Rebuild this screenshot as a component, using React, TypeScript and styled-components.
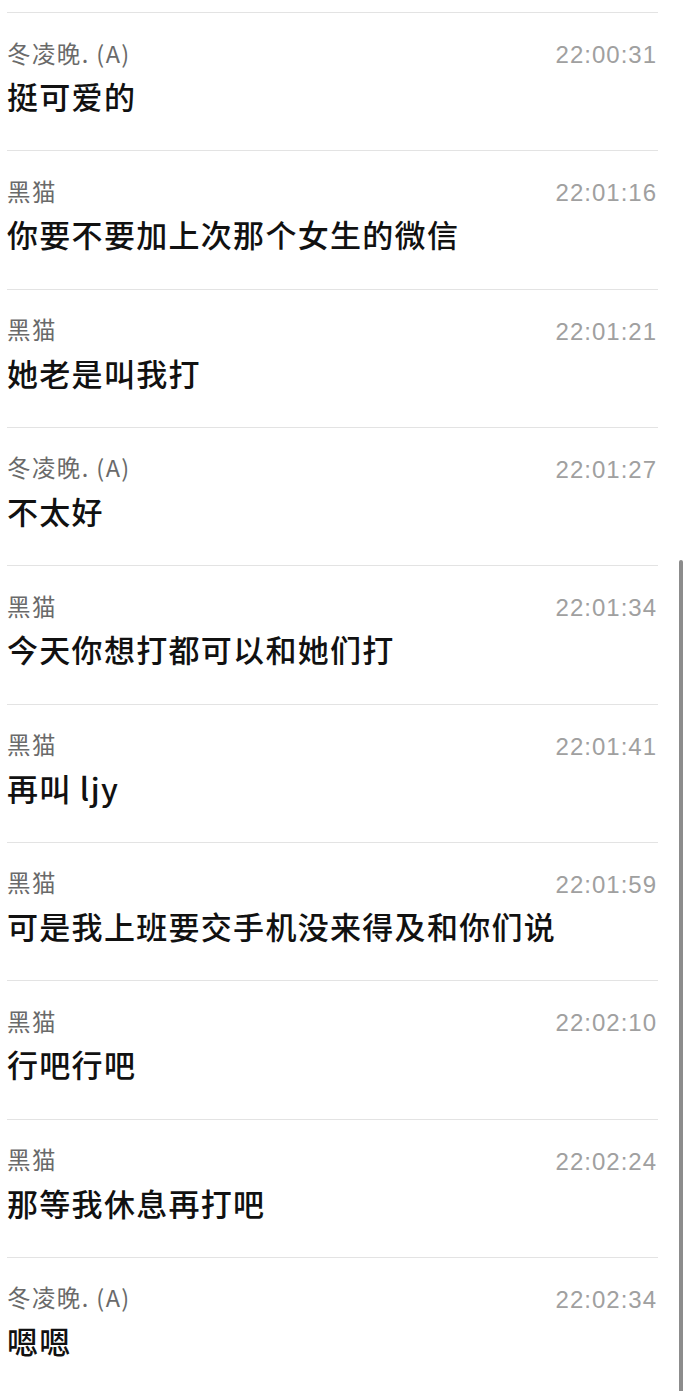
import React from 'react'
import styled, { createGlobalStyle } from 'styled-components'

const GlobalStyle = createGlobalStyle`
  html, body {
    margin: 0;
    padding: 0;
    background: #ffffff;
  }
  body {
    font-family: "Noto Sans CJK SC", "Noto Sans", sans-serif;
    -webkit-font-smoothing: antialiased;
  }
`

const Page = styled.div`
  position: relative;
  width: 690px;
  height: 1391px;
  overflow: hidden;
  background: #fff;
`

const List = styled.ul`
  list-style: none;
  margin: 0;
  padding: 12px 32px 0 7px;
`

const Row = styled.li`
  height: 138.33px;
  box-sizing: border-box;
  border-top: 1px solid #e3e3e3;
  padding: 27px 1px 0 0;
`

const Head = styled.div`
  display: flex;
  justify-content: space-between;
  align-items: center;
  height: 30px;
`

const Name = styled.span`
  margin-bottom: 5px;
  font-size: 23.5px;
  color: #6a6a6a;
  letter-spacing: 1.4px;
`

const Time = styled.span`
  font-family: "Liberation Sans", "Noto Sans", sans-serif;
  font-size: 24px;
  color: #a0a0a0;
  letter-spacing: 1px;
`

const Message = styled.div`
  margin-top: 8px;
  font-size: 31px;
  font-weight: 500;
  color: #111;
  line-height: 36px;
  letter-spacing: 1.3px;
`

const Scrollbar = styled.div`
  position: absolute;
  top: 560px;
  bottom: 0;
  right: 7px;
  width: 4px;
  border-radius: 2px 2px 0 0;
  background: #8c8c8c;
`

const messages = [
  { name: '冬凌晚. (A)', time: '22:00:31', text: '挺可爱的' },
  { name: '黑猫', time: '22:01:16', text: '你要不要加上次那个女生的微信' },
  { name: '黑猫', time: '22:01:21', text: '她老是叫我打' },
  { name: '冬凌晚. (A)', time: '22:01:27', text: '不太好' },
  { name: '黑猫', time: '22:01:34', text: '今天你想打都可以和她们打' },
  { name: '黑猫', time: '22:01:41', text: '再叫 ljy' },
  { name: '黑猫', time: '22:01:59', text: '可是我上班要交手机没来得及和你们说' },
  { name: '黑猫', time: '22:02:10', text: '行吧行吧' },
  { name: '黑猫', time: '22:02:24', text: '那等我休息再打吧' },
  { name: '冬凌晚. (A)', time: '22:02:34', text: '嗯嗯' },
]

export default function App() {
  return (
    <Page>
      <GlobalStyle />
      <List>
        {messages.map((m) => (
          <Row key={m.time}>
            <Head>
              <Name>{m.name}</Name>
              <Time>{m.time}</Time>
            </Head>
            <Message>{m.text}</Message>
          </Row>
        ))}
      </List>
      <Scrollbar />
    </Page>
  )
}
